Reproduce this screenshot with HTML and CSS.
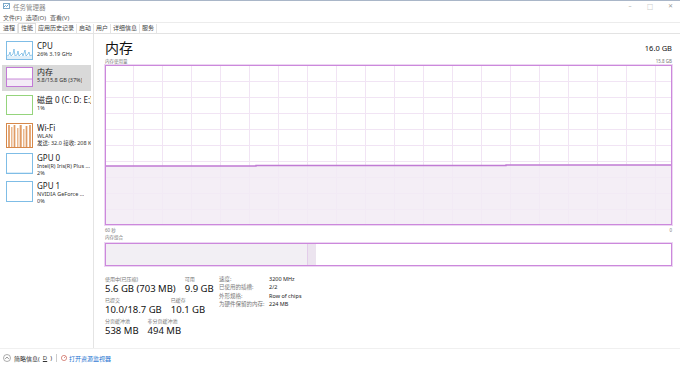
FILE: index.html
```html
<!DOCTYPE html>
<html>
<head>
<meta charset="UTF-8">
<title>任务管理器</title>
<link rel="stylesheet" href="styles.css">
</head>
<body>
<div class="titlebar">
	<svg class="appicon" width="7" height="7" viewBox="0 0 7 7"><rect x="0.5" y="0.5" width="6" height="5" fill="#fff" stroke="#7aa7c7"/><polyline points="1,4 2.5,2.5 3.5,3.5 5.5,1.5" fill="none" stroke="#3d8ac4" stroke-width="0.8"/></svg>
	<span class="title">任务管理器</span>
	<div class="winbtns">
		<span class="wb">&#8211;</span>
		<span class="wb">&#9633;</span>
		<span class="wb">&#10005;</span>
	</div>
</div>
<div class="menubar">
	<span>文件(F)</span><span>选项(O)</span><span>查看(V)</span>
</div>
<div class="tabs">
	<span class="tab">进程</span><span class="tab on">性能</span><span class="tab">应用历史记录</span><span class="tab">启动</span><span class="tab">用户</span><span class="tab">详细信息</span><span class="tab">服务</span>
</div>
<div class="wrap">
	<ul class="side">
		<li class="first">
			<svg class="thumb" width="27" height="19" viewBox="0 0 27 19"><rect x="0.5" y="0.5" width="26" height="18" fill="#fff" stroke="#7fbde6"/><polyline points="1,15 3,14 4,11 5,15 7,13 8,8 9,15 11,14 12,10 13,15 15,13 16,12 17,15 19,9 20,15 22,13 23,11 24,15 26,14" fill="none" stroke="#4ba3dc" stroke-width="0.6"/><rect x="1" y="15" width="25" height="3" fill="#e2f0fa"/></svg>
			<div class="txt"><b>CPU</b><i>26% 3.19 GHz</i></div>
		</li>
		<li class="sel">
			<svg class="thumb" width="27" height="20" viewBox="0 0 27 20"><rect x="0.5" y="0.5" width="26" height="19" fill="#fff" stroke="#c27ad6"/><rect x="1" y="12" width="25" height="7" fill="#f3ebf6"/><line x1="1" y1="12" x2="26" y2="12" stroke="#b45ccb" stroke-width="0.7"/></svg>
			<div class="txt"><b>内存</b><i>5.8/15.8 GB (37%)</i></div>
		</li>
		<li>
			<svg class="thumb" width="27" height="20" viewBox="0 0 27 20"><rect x="0.5" y="0.5" width="26" height="19" fill="#fff" stroke="#95d47c"/></svg>
			<div class="txt"><b>磁盘 0 (C: D: E:)</b><i>1%</i></div>
		</li>
		<li class="tall">
			<svg class="thumb" width="27" height="25" viewBox="0 0 27 25"><rect x="0.5" y="0.5" width="26" height="24" fill="#fff" stroke="#d6884a"/><g fill="#eab88e"><rect x="2" y="2" width="2" height="22"/><rect x="5" y="4" width="1.5" height="20"/><rect x="7.5" y="2" width="2" height="22"/><rect x="11" y="5" width="1.5" height="19"/><rect x="13.5" y="2" width="2.5" height="22"/><rect x="17" y="6" width="1.5" height="18"/><rect x="19.5" y="3" width="2" height="21"/><rect x="23" y="2" width="2" height="22"/></g><g stroke="#d6884a" stroke-width="0.6"><line x1="3" y1="2" x2="3" y2="24"/><line x1="8.5" y1="2" x2="8.5" y2="24"/><line x1="14.5" y1="2" x2="14.5" y2="24"/><line x1="20.5" y1="3" x2="20.5" y2="24"/><line x1="24" y1="2" x2="24" y2="24"/></g></svg>
			<div class="txt"><b>Wi-Fi</b><i>WLAN</i><i>发送: 32.0 接收: 208 K</i></div>
		</li>
		<li>
			<svg class="thumb" width="27" height="21" viewBox="0 0 27 21"><rect x="0.5" y="0.5" width="26" height="20" fill="#fff" stroke="#7fbde6"/><line x1="1" y1="19.5" x2="26" y2="19.5" stroke="#c5e1f4" stroke-width="0.6"/></svg>
			<div class="txt"><b>GPU 0</b><i>Intel(R) Iris(R) Plus ...</i><i>2%</i></div>
		</li>
		<li>
			<svg class="thumb" width="27" height="21" viewBox="0 0 27 21"><rect x="0.5" y="0.5" width="26" height="20" fill="#fff" stroke="#7fbde6"/></svg>
			<div class="txt"><b>GPU 1</b><i>NVIDIA GeForce ...</i><i>0%</i></div>
		</li>
	</ul>
	<div class="main">
		<div class="head">
			<h1>内存</h1>
			<span class="total">16.0 GB</span>
		</div>
		<div class="cap"><span>内存使用量</span><span>15.8 GB</span></div>
		<div class="chart">
			<svg width="565" height="158" viewBox="0 0 565 158">
				<g stroke="#f1e4f4" stroke-width="1">
					<line x1="27.5" y1="0" x2="27.5" y2="158"/><line x1="56.5" y1="0" x2="56.5" y2="158"/><line x1="85.5" y1="0" x2="85.5" y2="158"/><line x1="114.5" y1="0" x2="114.5" y2="158"/><line x1="143.5" y1="0" x2="143.5" y2="158"/><line x1="172.5" y1="0" x2="172.5" y2="158"/><line x1="201.5" y1="0" x2="201.5" y2="158"/><line x1="230.5" y1="0" x2="230.5" y2="158"/><line x1="259.5" y1="0" x2="259.5" y2="158"/><line x1="288.5" y1="0" x2="288.5" y2="158"/><line x1="317.5" y1="0" x2="317.5" y2="158"/><line x1="346.5" y1="0" x2="346.5" y2="158"/><line x1="375.5" y1="0" x2="375.5" y2="158"/><line x1="404.5" y1="0" x2="404.5" y2="158"/><line x1="433.5" y1="0" x2="433.5" y2="158"/><line x1="462.5" y1="0" x2="462.5" y2="158"/><line x1="491.5" y1="0" x2="491.5" y2="158"/><line x1="520.5" y1="0" x2="520.5" y2="158"/><line x1="549.5" y1="0" x2="549.5" y2="158"/>
					<line x1="0" y1="15.5" x2="565" y2="15.5"/><line x1="0" y1="31.5" x2="565" y2="31.5"/><line x1="0" y1="47.5" x2="565" y2="47.5"/><line x1="0" y1="63.5" x2="565" y2="63.5"/><line x1="0" y1="79.5" x2="565" y2="79.5"/><line x1="0" y1="95.5" x2="565" y2="95.5"/><line x1="0" y1="111.5" x2="565" y2="111.5"/><line x1="0" y1="127.5" x2="565" y2="127.5"/><line x1="0" y1="143.5" x2="565" y2="143.5"/>
				</g>
				<polygon points="0,100 150,100 150,99.5 400,99.5 400,99 565,99 565,158 0,158" fill="#f2ebf5" fill-opacity="0.85"/>
				<polyline points="0,100 150,100 150,99.5 400,99.5 400,99 565,99" fill="none" stroke="#c07ad4" stroke-width="1.4"/>
			</svg>
		</div>
		<div class="cap axis"><span>60 秒</span><span>0</span></div>
		<div class="cap">内存组合</div>
		<div class="combo">
			<div class="used"></div><div class="mod"></div>
		</div>
		<div class="stats">
			<div class="left">
				<div class="row">
					<div class="st"><span>使用中(已压缩)</span><strong>5.6 GB (703 MB)</strong></div>
					<div class="st"><span>可用</span><strong>9.9 GB</strong></div>
				</div>
				<div class="row">
					<div class="st"><span>已提交</span><strong>10.0/18.7 GB</strong></div>
					<div class="st"><span>已缓存</span><strong>10.1 GB</strong></div>
				</div>
				<div class="row">
					<div class="st"><span>分页缓冲池</span><strong>538 MB</strong></div>
					<div class="st"><span>非分页缓冲池</span><strong>494 MB</strong></div>
				</div>
			</div>
			<dl class="info">
				<dt>速度:</dt><dd>3200 MHz</dd>
				<dt>已使用的插槽:</dt><dd>2/2</dd>
				<dt>外形规格:</dt><dd>Row of chips</dd>
				<dt>为硬件保留的内存:</dt><dd>224 MB</dd>
			</dl>
		</div>
	</div>
</div>
<div class="foot">
	<span class="less"><svg width="8" height="8" viewBox="0 0 8 8"><circle cx="4" cy="4" r="3.5" fill="none" stroke="#777" stroke-width="0.6"/><polyline points="2.3,4.8 4,3.1 5.7,4.8" fill="none" stroke="#555" stroke-width="0.7"/></svg>简略信息(<u>D</u>)</span>
	<span class="bar"></span>
	<span class="link"><svg width="6" height="6" viewBox="0 0 6 6"><circle cx="3" cy="3" r="2.6" fill="#fff" stroke="#c24a3a" stroke-width="0.6"/><line x1="3" y1="3" x2="4.5" y2="1.5" stroke="#c24a3a" stroke-width="0.6"/></svg>打开资源监视器</span>
</div>
</body>
</html>
```
FILE: styles.css
```css
*{ margin:0; padding:0; list-style:none; box-sizing:border-box;}
body{ width:680px; height:366px; overflow:hidden; background:#fff; border-top:1px solid #a9b6c8; font-family:"Noto Sans","Noto Sans CJK SC",sans-serif; color:#222;}

.titlebar{ height:11px; display:flex; align-items:center; padding-left:3px; font-size:6.5px; color:#8a8a8a;}
.appicon{ margin-right:3px;}
.winbtns{ margin-left:auto; display:flex;}
.wb{ width:20px; text-align:center; font-size:6px; color:#999;}

.menubar{ height:10px; display:flex; align-items:center; padding-left:3px; font-size:6px; color:#555; gap:4px;}

.tabs{ height:12px; display:flex; align-items:flex-end; border-top:1px solid #ececec; border-bottom:1px solid #e3e3e3; padding-left:1px;}
.tab{ height:9px; line-height:9px; font-size:6px; color:#444; padding:0 2px; border-right:1px solid #e4e4e4;}
.tab.on{ background:#fff; border:1px solid #ddd; border-bottom:none; height:10px;}

.wrap{ display:flex; height:314px;}
.side{ width:94px; padding-top:5px; border-right:1px solid #e4e4e4;}
.side li{ display:flex; align-items:flex-start; height:28px; padding:2px 0 0 6px; margin:0 2px 0 0;}
.side li.first{ height:26px;}
.side li.sel{ background:#d9d9d9; margin-left:2px; padding-left:4px; height:26px; margin-bottom:2px;}
.side li.tall{ height:30px;}
.thumb{ flex:none;}
.txt{ margin-left:4px; display:flex; flex-direction:column; white-space:nowrap; overflow:hidden;}
.txt b{ font-weight:normal; font-size:8px; line-height:10px; color:#222;}
.txt i{ font-style:normal; font-size:5.5px; line-height:7px; color:#333;}

.main{ flex:1; padding:4px 8px 0 11px;}
.head{ display:flex; justify-content:space-between; align-items:center; height:20px;}
.head h1{ font-weight:normal; font-size:14px; line-height:18px; color:#111;}
.total{ font-size:7.5px; color:#111;}
.cap{ display:flex; justify-content:space-between; font-size:4.5px; line-height:7px; color:#777;}
.chart{ border:1px solid #cc88dc; box-shadow:0 0 0 1px #ecd6f2; height:160px;}
.chart svg{ display:block;}
.axis{ margin-top:1px; line-height:8px;}
.combo{ display:flex; height:23px; border:1px solid #cc88dc; box-shadow:0 0 0 1px #ecd6f2; margin-top:2px;}
.used{ width:202px; background:#f2eff4; border-right:1px solid #e3cdea;}
.mod{ width:8px; background:#ece4ef;}

.stats{ display:flex; align-items:flex-start; margin-top:10px;}
.left{ width:114px;}
.row{ display:flex; gap:9px; margin-bottom:2px;}
.st{ display:flex; flex-direction:column;}
.st span{ font-size:5px; line-height:7px; color:#777;}
.st strong{ font-weight:normal; font-size:9.5px; line-height:12px; color:#111; white-space:nowrap;}
.info{ display:grid; grid-template-columns:50px auto; font-size:5.5px; line-height:8.3px; margin-top:-1px;}
.info dt{ color:#777;}
.info dd{ color:#222;}

.foot{ height:19px; display:flex; align-items:center; padding-left:3px; font-size:6px; color:#333; border-top:1px solid #f0f0f0;}
.less{ display:flex; align-items:center; gap:3px;}
.less u{ text-decoration:underline;}
.bar{ width:1px; height:8px; background:#ccc; margin:0 4px;}
.link{ display:flex; align-items:center; gap:2px; color:#1a6fd0;}
```
